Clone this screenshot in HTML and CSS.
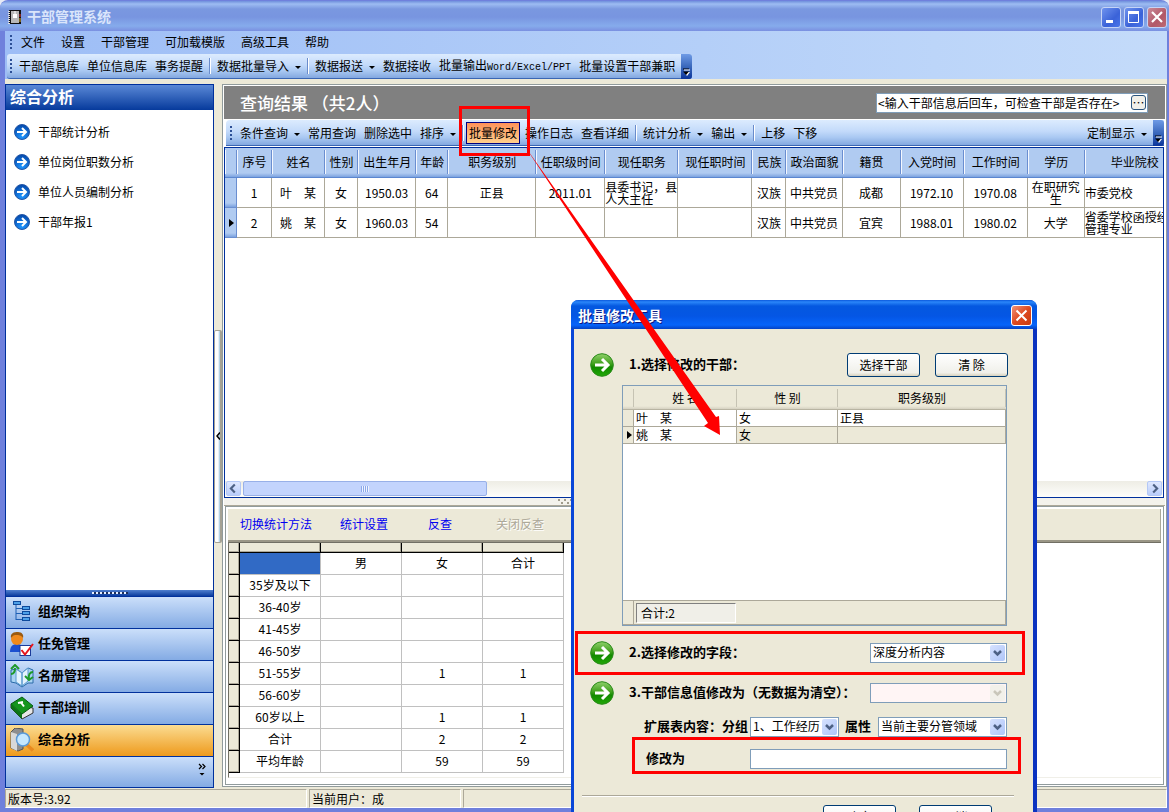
FILE: index.html
```html
<!DOCTYPE html>
<html lang="zh-CN">
<head>
<meta charset="utf-8">
<title>干部管理系统</title>
<link rel="stylesheet" href="styles.css">
</head>
<body>
<svg class="defs" aria-hidden="true">
  <defs>
    <radialGradient id="blueBall" cx="50%" cy="80%" r="80%"><stop offset="0" stop-color="#1e96ff"/><stop offset="1" stop-color="#0446a8"/></radialGradient>
    <linearGradient id="greenBall" x1="0" y1="0" x2="0" y2="1"><stop offset="0" stop-color="#8fd06a"/><stop offset=".45" stop-color="#3fa01c"/><stop offset=".6" stop-color="#128a00"/><stop offset="1" stop-color="#22a808"/></linearGradient>
    <symbol id="goBlue" viewBox="0 0 16 16"><circle cx="8" cy="8" r="7.5" fill="url(#blueBall)" stroke="#2458a8"/><path d="M3 8h9M8 4l4 4-4 4" fill="none" stroke="#fff" stroke-width="2"/></symbol>
    <symbol id="goGreen" viewBox="0 0 24 24"><circle cx="12" cy="12" r="11.3" fill="url(#greenBall)" stroke="#2a8a1a"/><path d="M5 12h12M12 6l6 6-6 6" fill="none" stroke="#fff" stroke-width="3"/></symbol>
    <symbol id="chev" viewBox="0 0 15 15"><path d="M4 5.500l3.500 3.500L11 5.500" fill="none" stroke="currentColor" stroke-width="2.500"/></symbol>
    <symbol id="overflow" viewBox="0 0 7 8"><path d="M0 1h6" stroke="#000" stroke-width="1"/><path d="M1 2h6" stroke="#fff" stroke-width="1"/><path d="M1 4h6L4 8z" fill="#fff"/><path d="M0 3.500h6L3 7z" fill="#000"/></symbol>
  </defs>
</svg>
<div class="window">
  <header class="titlebar">
    <svg class="app-icon" viewBox="0 0 13 14"><rect x="1" width="12" height="14" fill="#111"/><rect x="3" y="1" width="8" height="12" fill="#b8b8b8"/><rect x="5" y="4" width="4" height="4" fill="#fff"/><path d="M7 1v3" stroke="#fff"/><path d="M1 1v13" stroke="#ddd" stroke-width="2" stroke-dasharray="1 1"/><path d="M12 4v3" stroke="#d33"/><path d="M12 8v4" stroke="#e6b422"/></svg>
    <h1>干部管理系统</h1>
    <div class="win-buttons">
      <button class="wb" aria-label="最小化"><svg viewBox="0 0 18 18"><path d="M4 13.500h7" stroke="#fff" stroke-width="3"/></svg></button>
      <button class="wb" aria-label="最大化"><svg viewBox="0 0 18 18"><path d="M3.500 4v10.500h10V4" fill="none" stroke="#fff"/><path d="M3 4.500h11" stroke="#fff" stroke-width="3"/></svg></button>
      <button class="wb close" aria-label="关闭"><svg viewBox="0 0 18 18"><path d="M4 4l10 10M14 4L4 14" stroke="#fff" stroke-width="2.200"/></svg></button>
    </div>
  </header>
  <div class="bars">
    <nav class="menubar">
      <span class="grip"></span>
      <button>文件</button><button>设置</button><button>干部管理</button><button>可加载模版</button><button>高级工具</button><button>帮助</button>
    </nav>
    <div class="toolbar top">
      <span class="grip"></span>
      <button>干部信息库</button><button>单位信息库</button><button>事务提醒</button><span class="sep"></span>
      <button class="drop">数据批量导入</button><span class="sep"></span>
      <button class="drop">数据报送</button><button>数据接收</button><button>批量输出<span class="mono">Word/Excel/PPT</span></button><button>批量设置干部兼职</button>
      <button class="more" aria-label="更多"><svg><use href="#overflow"/></svg></button>
    </div>
  </div>
  <div class="work">
    <aside class="sidebar">
      <h2>综合分析</h2>
      <nav class="links">
        <a href="#a"><svg><use href="#goBlue"/></svg>干部统计分析</a>
        <a href="#b"><svg><use href="#goBlue"/></svg>单位岗位职数分析</a>
        <a href="#c"><svg><use href="#goBlue"/></svg>单位人员编制分析</a>
        <a href="#d"><svg><use href="#goBlue"/></svg>干部年报1</a>
      </nav>
      <div class="nav-split"><span></span></div>
      <nav class="modules">
        <button><svg viewBox="0 0 24 24"><path d="M6 5v15M6 8.500h6M6 13.500h6M6 19.500h6" stroke="#1d5fb4" fill="none"/><g fill="#4da0e8" stroke="#0e4a9c"><rect x="3.500" y="1.500" width="7" height="3"/><rect x="12.500" y="6.500" width="7" height="3"/><rect x="12.500" y="11.500" width="7" height="3"/><rect x="12.500" y="17.500" width="7" height="3"/></g></svg>组织架构</button>
        <button><svg viewBox="0 0 24 24"><path d="M0 20c0-6 3-8 7-8s7 2 7 8z" fill="#1c4fd0"/><circle cx="7" cy="7" r="6" fill="#f08a1c"/><path d="M1 6C0 1 4 0 8 0s6 3 5 6c-2-3-4-3-7-3-3 0-3 1-5 3z" fill="#9a5a10"/><rect x="10" y="13.500" width="10.500" height="10" fill="#fff" stroke="#1a3a9a"/><path d="M11.500 18l3.500 4.500L23 12" fill="none" stroke="#e6151c" stroke-width="2"/></svg>任免管理</button>
        <button><svg viewBox="0 0 24 24"><path d="M1 6l5-1 6 4 6-5 5 2v13l-5 0-6 4-6-4-5-1z" fill="#a9d3f4" stroke="#2a6aa8"/><path d="M6 5v13l6 4V9zM18 4v13l-6 5V9z" fill="#e4f3fe" stroke="#5a9ad0"/><path d="M1 10c3 0 4-2 4-6M1 5l4-4 4 4" fill="none" stroke="#1f9a2a" stroke-width="2"/><path d="M23 8c-3 0-5 3-4 7M15 12l4 4 4-3" fill="none" stroke="#1f9a2a" stroke-width="2"/></svg>名册管理</button>
        <button><svg viewBox="0 0 24 24"><path d="M1 8v4l11 11 11-6v-5z" fill="#e8e8e8" stroke="#333"/><path d="M1 8L12 1l11 9-11 8z" fill="#14951e" stroke="#075c0e"/><path d="M1 8v4l11 11v-5z" fill="#0b7514"/><path d="M8 7l5-1M11 6.500l3 4" stroke="#fff" stroke-width="2"/></svg>干部培训</button>
        <button class="on"><svg viewBox="0 0 24 24"><path d="M1 4l4-4 8 1v20l-5 2-7-3z" fill="#8e8e8e" stroke="#555"/><path d="M1 4l6 2v17l-6-3z" fill="#d8d8d8"/><path d="M17 17l6 5.500" stroke="#e88a20" stroke-width="3.500"/><circle cx="13" cy="11.500" r="6.500" fill="#c6e8ff" stroke="#5a9ad8" stroke-width="1.500"/></svg>综合分析</button>
      </nav>
      <div class="nav-more"><button aria-label="配置按钮"><svg viewBox="0 0 8 14"><path d="M1 1l2.500 2.500L1 6M4.500 1L7 3.500 4.500 6" fill="none" stroke="#000" stroke-width="1.200"/><path d="M1.500 10h5L4 12.500z"/></svg></button></div>
    </aside>
    <div class="vsplit"><button aria-label="折叠"><svg viewBox="0 0 4 8"><path d="M4 .5L1 4l3 3.500" fill="none" stroke="#000" stroke-width="1.500"/></svg></button></div>
    <main class="panel">
      <div class="result-head">
        <h2>查询结果 （共2人）</h2>
        <div class="search"><input type="text" aria-label="检查干部" value="&lt;输入干部信息后回车，可检查干部是否存在&gt;"><button aria-label="浏览">…</button></div>
      </div>
      <div class="toolbar inner">
        <span class="grip"></span>
        <button class="drop">条件查询</button><button>常用查询</button><button>删除选中</button><button class="drop">排序</button><span class="sep"></span>
        <button class="hot">批量修改</button><button>操作日志</button><button>查看详细</button><span class="sep"></span>
        <button class="drop">统计分析</button><button class="drop">输出</button><span class="sep"></span><button>上移</button><button>下移</button>
        <button class="drop last">定制显示</button>
        <button class="more" aria-label="更多"><svg><use href="#overflow"/></svg></button>
      </div>
      <div class="grid-box">
        <div class="grid-view">
        <table class="grid">
          <colgroup><col class="w12"><col class="w35"><col class="w53"><col class="w33"><col class="w58"><col class="w32"><col class="w88"><col class="w69"><col class="w73"><col class="w74"><col class="w34"><col class="w56"><col class="w58"><col class="w63"><col class="w64"><col class="w57"><col class="w100"></colgroup>
          <thead><tr><th></th><th>序号</th><th>姓名</th><th>性别</th><th>出生年月</th><th>年龄</th><th>职务级别</th><th>任职级时间</th><th>现任职务</th><th>现任职时间</th><th>民族</th><th>政治面貌</th><th>籍贯</th><th>入党时间</th><th>工作时间</th><th>学历</th><th>毕业院校</th></tr></thead>
          <tbody>
            <tr><td class="ind"></td><td>1</td><td>叶　某</td><td>女</td><td>1950.03</td><td>64</td><td>正县</td><td>2011.01</td><td class="l">县委书记，县<br>人大主任</td><td></td><td>汉族</td><td>中共党员</td><td>成都</td><td>1972.10</td><td>1970.08</td><td>在职研究<br>生</td><td class="l">市委党校</td></tr>
            <tr><td class="ind"><i class="mark"></i></td><td>2</td><td>姚　某</td><td>女</td><td>1960.03</td><td>54</td><td></td><td></td><td></td><td></td><td>汉族</td><td>中共党员</td><td>宜宾</td><td>1988.01</td><td>1980.02</td><td>大学</td><td class="l">省委学校函授经济<br>管理专业</td></tr>
          </tbody>
        </table>
        </div>
        <div class="hscroll">
          <button aria-label="向左"><svg viewBox="0 0 15 15"><path d="M9 3L4.500 7.500 9 12" fill="none" stroke="#4d6185" stroke-width="2.500"/></svg></button>
          <span class="thumb"><i></i></span>
          <button class="right" aria-label="向右"><svg viewBox="0 0 15 15"><path d="M6 3l4.500 4.500L6 12" fill="none" stroke="#4d6185" stroke-width="2.500"/></svg></button>
        </div>
      </div>
      <div class="hsplit"><span></span></div>
      <section class="stats">
        <div class="stat-bar"><button>切换统计方法</button><button>统计设置</button><button>反查</button><button disabled>关闭反查</button></div>
        <div class="stat-body">
        <table class="stat">
          <colgroup><col class="w11"><col class="w81"><col class="w81"><col class="w81"><col class="w81"></colgroup>
          <thead><tr><th></th><th></th><th></th><th></th><th></th></tr></thead>
          <tbody>
            <tr><th></th><td class="sel"></td><td>男</td><td>女</td><td>合计</td></tr>
            <tr><th></th><td>35岁及以下</td><td></td><td></td><td></td></tr>
            <tr><th></th><td>36-40岁</td><td></td><td></td><td></td></tr>
            <tr><th></th><td>41-45岁</td><td></td><td></td><td></td></tr>
            <tr><th></th><td>46-50岁</td><td></td><td></td><td></td></tr>
            <tr><th></th><td>51-55岁</td><td></td><td>1</td><td>1</td></tr>
            <tr><th></th><td>56-60岁</td><td></td><td></td><td></td></tr>
            <tr><th></th><td>60岁以上</td><td></td><td>1</td><td>1</td></tr>
            <tr><th></th><td>合计</td><td></td><td>2</td><td>2</td></tr>
            <tr><th></th><td>平均年龄</td><td></td><td>59</td><td>59</td></tr>
          </tbody>
        </table>
        </div>
      </section>
    </main>
  </div>
  <footer class="status"><span class="s1">版本号:3.92</span><span class="s2">当前用户：成</span><span class="s3"></span></footer>
</div>

<section class="dialog" role="dialog" aria-labelledby="dlg-title">
  <header><h2 id="dlg-title">批量修改工具</h2><button aria-label="关闭"><svg viewBox="0 0 19 19"><path d="M4.500 4.500l10 10M14.500 4.500l-10 10" stroke="#fff" stroke-width="2"/></svg></button></header>
  <div class="dlg-body">
    <div class="step first"><svg><use href="#goGreen"/></svg><h3>1.选择修改的干部：</h3><button class="btn">选择干部</button><button class="btn">清 除</button></div>
    <div class="people">
      <table>
        <colgroup><col class="w11"><col class="w103"><col class="w101"><col></colgroup>
        <thead><tr><th></th><th>姓 名</th><th>性 别</th><th>职务级别</th></tr></thead>
        <tbody>
          <tr><td class="ind"></td><td>叶　某</td><td>女</td><td>正县</td></tr>
          <tr class="cur"><td class="ind"><i class="mark"></i></td><td>姚　某</td><td>女</td><td></td></tr>
        </tbody>
      </table>
      <div class="total"><span>合计:2</span></div>
    </div>
    <div class="step second"><svg><use href="#goGreen"/></svg><h3><label for="field">2.选择修改的字段：</label></h3><span class="combo wide"><select id="field"><option>深度分析内容</option></select><svg><use href="#chev"/></svg></span></div>
    <div class="step third"><svg><use href="#goGreen"/></svg><h3><label for="val">3.干部信息值修改为（无数据为清空）：</label></h3><span class="combo wide off"><select id="val" disabled><option></option></select><svg><use href="#chev"/></svg></span></div>
    <div class="ext"><label for="grp">扩展表内容：分组</label><span class="combo grp"><select id="grp"><option>1、工作经历</option></select><svg><use href="#chev"/></svg></span><label for="attr">属性</label><span class="combo attr"><select id="attr"><option>当前主要分管领域</option></select><svg><use href="#chev"/></svg></span></div>
    <div class="change"><label for="newv">修改为</label><input id="newv" type="text"></div>
    <hr>
    <div class="actions"><button class="btn">确定</button><button class="btn">取消</button></div>
  </div>
</section>

<svg class="notes" viewBox="0 0 1169 812" aria-hidden="true">
  <g fill="none" stroke="#f00" stroke-width="3"><rect x="460.500" y="107.500" width="68" height="47"/><rect x="576.500" y="632.500" width="447" height="41"/><rect x="633.500" y="738.500" width="386" height="34"/></g>
  <path d="M524 145L716 417l3-1 1 19-16-9 4-3z" fill="#f00"/>
</svg>
</body>
</html>
```
FILE: styles.css
```css
* { box-sizing: border-box; }
html, body { height: 100%; margin: 0; }
body { position: relative; overflow: hidden; background: #e6eaf5; color: #000; font: 12px/16px "Noto Sans CJK SC", sans-serif; }
button, input, select { font: inherit; color: inherit; margin: 0; padding: 0; border: 0; background: none; white-space: nowrap; }
h1, h2, h3 { margin: 0; font-weight: bold; white-space: nowrap; }
table { border-collapse: separate; border-spacing: 0; table-layout: fixed; }
th, td { padding: 0; font-weight: normal; white-space: nowrap; overflow: hidden; }
svg { display: block; flex: none; }
.defs { position: absolute; width: 0; height: 0; }
.mono { font-family: "Liberation Mono", monospace; font-size: 10px; }

.window { display: flex; flex-direction: column; height: 100%; min-height: 812px; padding: 1px 2px 4px 5px; background: #6f80dc; border-radius: 8px 8px 0 0; }
.titlebar { display: flex; align-items: center; gap: 6px; height: 30px; margin: 0 -2px 0 -5px; padding: 2px 2px 0 8px; border-radius: 7px 7px 0 0; background: linear-gradient(#6f8fdc 0, #9dbcf2 3px, #7a98e0 8px, #7895e0 16px, #86abec 25px, #7a90e0 30px); }
.app-icon { width: 13px; height: 14px; }
.titlebar h1 { flex: 1; font-size: 14px; line-height: 20px; padding-bottom: 2px; color: #dae5fb; }
.win-buttons { display: flex; gap: 3px; }
.wb { width: 20px; height: 21px; border: 1px solid #c5d4f6; border-radius: 3px; background: linear-gradient(135deg, #6f93ee, #3a62d8 60%, #4a76ea); }
.wb.close { background: linear-gradient(135deg, #c98a98, #b25868 60%, #bd6a74); }

.bars { background: linear-gradient(90deg, #9dbdf6, #b4cff8 60%, #c4dbfa); }
.menubar { display: flex; align-items: center; height: 23px; padding: 0 0 2px 5px; }
.menubar button { padding: 0 8px; }
.grip { width: 2px; height: 14px; margin-right: 1px; background: repeating-linear-gradient(#2c4f96 0 2px, transparent 2px 4px); }
.toolbar { display: flex; align-items: center; background: linear-gradient(#dcebfe, #c3dafa 45%, #a9c8f2 70%, #83a8e0); border-bottom: 1px solid #3a66b4; }
.toolbar button { padding: 0 4px; height: 22px; }
.toolbar .grip { margin: 0 3px 0 0; }
.toolbar.top { width: max-content; height: 25px; margin-left: 2px; padding-left: 3px; border-radius: 3px; }
.toolbar .more { align-self: stretch; display: flex; align-items: flex-end; justify-content: center; width: 11px; height: auto; padding: 0 0 3px; margin: 0 0 -1px 2px; border-radius: 0 3px 3px 0; background: linear-gradient(#6f9be6, #3a68bc 50%, #0a349a); }
.more svg { width: 7px; height: 8px; }
.drop::after { content: ""; display: inline-block; vertical-align: middle; margin: 0 0 0 6px; border: 3px solid transparent; border-top-color: #000; border-bottom: 0; }
.sep { width: 2px; height: 16px; margin: 0 2px; background: linear-gradient(90deg, #6a8ccb 1px, #fff 1px); }
.toolbar.inner { height: 26px; margin: 1px 1px 0 2px; padding-left: 4px; border-radius: 4px 0 0 0; }
.toolbar.inner .grip { margin-right: 4px; }
.toolbar .hot { height: 22px; padding: 0 2px; border: 1px solid #000080; background: linear-gradient(#fe9158, #ffd08e); margin: 0 1px 0 0; }
.toolbar .last { margin-left: auto; }

.work { flex: 1; display: flex; min-height: 0; padding-top: 5px; background: #ece9d8; }
.sidebar { display: flex; flex-direction: column; width: 209px; border: 1px solid #00309c; background: #fff; }
.sidebar h2 { height: 25px; padding: 0 4px; font-size: 16px; line-height: 23px; color: #fff; background: linear-gradient(#5a88d6, #063a9c); }
.links { flex: 1; padding-top: 7px; }
.links a { display: flex; align-items: center; gap: 8px; height: 30px; padding-left: 8px; color: #000; text-decoration: none; }
.links svg { width: 16px; height: 16px; }
.nav-split { display: flex; justify-content: center; align-items: center; height: 6px; background: linear-gradient(#4f7fce, #0a3c9e); }
.nav-split span { width: 36px; height: 2px; background: repeating-linear-gradient(90deg, #e8f0ff 0 2px, #1c2f5c 2px 4px); }
.modules button { display: flex; align-items: center; gap: 4px; width: 100%; height: 32px; padding: 0 0 3px 4px; border-top: 1px solid #00309c; font-size: 13px; font-weight: bold; background: linear-gradient(#cbdffa, #84abe4); }
.modules svg { width: 24px; height: 24px; margin-top: 2px; }
.modules .on { background: linear-gradient(#fbdc92, #ee9a1c); }
.nav-more { display: flex; justify-content: flex-end; align-items: center; height: 31px; padding: 0 7px 4px 0; border-top: 1px solid #00309c; background: linear-gradient(#cbdffa, #84abe4); }
.nav-more svg { width: 8px; height: 14px; }
.vsplit { display: flex; align-items: center; width: 8px; }
.vsplit button { display: flex; align-items: center; justify-content: flex-end; width: 8px; height: 213px; border: 1px solid #a5a294; border-right-width: 2px; border-radius: 2px; background: linear-gradient(90deg, #fff 3px, #9dc4dc); }
.vsplit svg { width: 4px; height: 8px; }

.panel { flex: 1; min-width: 0; display: flex; flex-direction: column; margin-bottom: 1px; padding: 1px; border: 1px solid #919b9c; background: #fff; }
.result-head { display: flex; align-items: center; justify-content: space-between; height: 33px; padding: 0 17px 0 16px; background: #808080; }
.result-head h2 { font-size: 17px; line-height: 24px; font-weight: 500; color: #fff; }
.search { display: flex; align-items: center; width: 272px; height: 20px; padding: 1px; border: 1px solid #7f9db9; background: #fff; }
.search input { flex: 1; min-width: 0; height: 16px; }
.search button { width: 15px; height: 15px; border: 1px solid #2a557f; border-radius: 3px; background: #f1f0ea; line-height: 8px; }
.grid-box { flex: none; display: flex; flex-direction: column; height: 351px; margin: 1px 1px 0 0; border: 1px solid #00309c; }
.grid-view { flex: 1; overflow: hidden; }
.grid { width: 960px; text-align: center; line-height: 12px; }
.grid th { height: 30px; padding-bottom: 2px; border-bottom: 1px solid #5a86d0; background: linear-gradient(#6a8ed0, #6a8ed0) right 0 top 2px / 1px 24px no-repeat, linear-gradient(#f4f8ff, #f4f8ff) left 0 top 2px / 1px 24px no-repeat, linear-gradient(#b0cbf1 25px, #7ba2df); }
.grid td { height: 30px; border-right: 1px solid #aca899; border-bottom: 1px solid #aca899; }
.grid td.l { text-align: left; }
.grid td.ind { border-right-color: #6a8ed0; border-bottom-color: #6a8ed0; background: linear-gradient(#b0cbf1 25px, #7ba2df); }
.mark { display: block; width: 0; margin-left: 4px; border: 4px solid transparent; border-left: 5px solid #000; border-right: 0; }
.w11 { width: 11px; } .w12 { width: 12px; } .w32 { width: 32px; } .w33 { width: 33px; } .w34 { width: 34px; } .w35 { width: 35px; }
.w53 { width: 53px; } .w56 { width: 56px; } .w57 { width: 57px; } .w58 { width: 58px; } .w63 { width: 63px; } .w64 { width: 64px; }
.w69 { width: 69px; } .w73 { width: 73px; } .w74 { width: 74px; } .w81 { width: 81px; } .w88 { width: 88px; } .w100 { width: 100px; }
.w101 { width: 101px; } .w103 { width: 103px; }
.hscroll { display: flex; gap: 2px; height: 16px; padding: 0 1px; background: linear-gradient(#eeede5, #fefefb); }
.hscroll button, .thumb { width: 15px; height: 15px; border: 1px solid #b4c8f6; border-radius: 2px; background: linear-gradient(#dfe8ff, #b9cdfa); }
.hscroll .thumb { display: flex; align-items: center; justify-content: center; width: 244px; border-color: #98b0e8; background: #c3d4fd; }
.thumb i { width: 8px; height: 6px; background: repeating-linear-gradient(90deg, #8ca8ea 0 1px, #eef4fe 1px 2px); }
.hscroll .right { margin-left: auto; }
.hsplit { flex: none; display: flex; justify-content: center; align-items: center; height: 8px; padding-right: 260px; background: #f3f2ec; border-bottom: 1px solid #aca899; }
.hsplit span { width: 14px; height: 5px; background: repeating-linear-gradient(90deg, #a09c8c 0 2px, transparent 2px 6px) top / 14px 2px no-repeat, repeating-linear-gradient(90deg, transparent 0 3px, #a09c8c 3px 5px, transparent 5px 6px) bottom / 14px 2px no-repeat; }
.stats { flex: 1; min-height: 0; margin: 0 1px; padding: 2px; border: 1px solid #919b9c; }
.stat-bar { display: flex; height: 33px; padding: 0 12px 2px; border-bottom: 2px solid #9a9686; border-right: 1px solid #aca899; background: #ece9d8; color: #0000f0; }
.stat-bar button { margin-right: 28px; }
.stat-bar button:nth-child(2) { margin-right: 40px; }
.stat-bar button:nth-child(3) { margin-right: 44px; }
.stat-bar button:disabled { color: #aca899; text-shadow: 1px 1px #fff; }
.stat-body { border-left: 1px solid #716f64; border-bottom: 1px solid #f0efe8; border-top: 1px solid #716f64; padding-bottom: 4px; }
.stat { width: 335px; text-align: center; }
.stat th { border-right: 1px solid #000; border-bottom: 1px solid #000; background: #ece9d8; box-shadow: inset -1px -1px #aca899; }
.stat thead th { height: 10px; }
.stat td, .stat tbody th { height: 22px; }
.stat td { padding-bottom: 2px; border-right: 1px solid #c0c0c0; border-bottom: 1px solid #c0c0c0; }
.stat .sel { background: #316ac5; }
.status { display: flex; gap: 2px; height: 20px; padding-top: 1px; background: #ece9d8; }
.status span { padding-left: 2px; line-height: 17px; border: 1px solid #aca899; border-right-color: #fff; border-bottom-color: #fff; }
.s1 { width: 302px; } .s2 { width: 152px; } .s3 { flex: 1; }

.dialog { position: absolute; left: 571px; top: 300px; width: 466px; height: 540px; border: solid #0846d8; border-width: 0 4px 0 3px; border-right-color: #0a32c0; border-radius: 8px 8px 0 0; background: #ece9d8; }
.dialog > header { display: flex; align-items: center; justify-content: space-between; height: 29px; margin: 0 -4px 0 -3px; padding: 2px 5px 0 7px; border-radius: 7px 7px 0 0; background: linear-gradient(#0a58dc, #2a86fa 2px, #0458e0 6px, #0456e4 16px, #0664fa 25px, #0442c4); }
.dialog > header h2 { padding-bottom: 2px; font-size: 14px; color: #fff; text-shadow: 1px 1px #0a1883; }
.dialog > header button { width: 21px; height: 21px; border: 1px solid #fff; border-radius: 3px; background: linear-gradient(135deg, #f0937a, #de4a20 50%, #c83a10); }
.dlg-body { padding: 24px 26px 0 16px; }
.step { display: flex; align-items: center; height: 24px; }
.step > svg { width: 24px; height: 24px; }
.step h3, .ext label, .change label { font-size: 13px; font-weight: bold; line-height: 18px; padding-bottom: 2px; white-space: nowrap; }
.step label { padding: 0; }
.step h3 { flex: 1; padding-left: 15px; }
.btn { width: 73px; height: 24px; border: 1px solid #003c74; border-radius: 3px; background: linear-gradient(#fff, #f0f0ea 85%, #d8d2bd); }
.step .btn + .btn { margin-left: 15px; }
.step.first { margin-right: -1px; }
.people { display: flex; flex-direction: column; justify-content: space-between; height: 241px; margin: 8px 0 0 32px; border: 1px solid #7f9db9; background: #fff; }
.people table { width: 100%; }
.people th { height: 24px; border-bottom: 1px solid #b8b4a2; background: linear-gradient(#c6c3b3, #c6c3b3) right 0 top 3px / 1px 18px no-repeat, linear-gradient(#ece9d8 20px, #d6d2c2); }
.people td { height: 17px; padding-left: 2px; line-height: 14px; border-right: 1px solid #aca899; border-bottom: 1px solid #aca899; }
.people td.ind { padding: 0; background: #ece9d8; }
.cur td:nth-child(n+3) { background: #ece9d8; }
.total { height: 25px; padding: 2px 0 0 13px; border-top: 1px solid #aca899; background: linear-gradient(90deg, transparent 10px, #aca899 10px 11px, transparent 11px), #ece9d8; box-shadow: inset -1px -1px #aca899; }
.total span { display: block; width: 100px; height: 20px; padding-left: 4px; line-height: 18px; border: 1px solid #808080; border-right-color: #fff; border-bottom-color: #fff; background: #f0efe8; }
.step.second { margin-top: 15px; }
.step.third { margin-top: 16px; }
.combo { position: relative; height: 20px; }
.combo select { display: block; width: 100%; height: 20px; padding: 0 18px 2px 2px; border: 1px solid #7f9db9; background: #fff; appearance: none; opacity: 1; }
.combo svg { position: absolute; top: 2px; right: 2px; width: 15px; height: 16px; border-radius: 2px; background: linear-gradient(135deg, #d6e2ff, #afc5f8); color: #4d6185; pointer-events: none; }
.combo.off select { background: #fff5f5; }
.combo.off svg { background: #f2f1ea; color: #c9c7ba; }
.wide { width: 137px; }
.ext { display: flex; align-items: center; margin: 12px 0 0 54px; }
.ext .grp { width: 89px; margin: 0 6px 0 2px; }
.ext .attr { flex: 1; margin-left: 7px; }
.change { display: flex; align-items: center; margin: 12px 0 0 56px; }
.change label { width: 104px; }
.change input { flex: 1; min-width: 0; height: 20px; border: 1px solid #7f9db9; background: #fff; }
hr { height: 2px; margin: 26px -7px 8px -8px; border: 0; border-top: 1px solid #aca899; border-bottom: 1px solid #fff; }
.actions { display: flex; justify-content: flex-end; gap: 23px; padding-right: 15px; }
.actions .btn { line-height: 12px; }
.notes { position: absolute; left: 0; top: 0; width: 1169px; height: 812px; pointer-events: none; }
```
